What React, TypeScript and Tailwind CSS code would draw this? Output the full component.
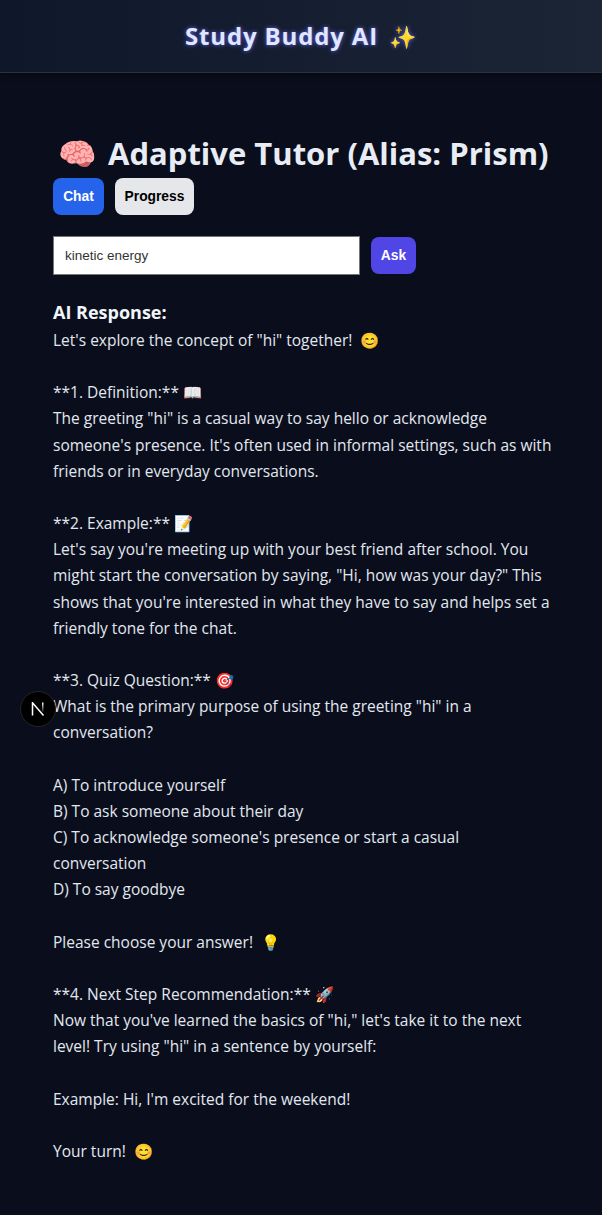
const response = `Let's explore the concept of "hi" together!  😊

**1. Definition:** 📖
The greeting "hi" is a casual way to say hello or acknowledge someone's presence. It's often used in informal settings, such as with friends or in everyday conversations.

**2. Example:** 📝
Let's say you're meeting up with your best friend after school. You might start the conversation by saying, "Hi, how was your day?" This shows that you're interested in what they have to say and helps set a friendly tone for the chat.

**3. Quiz Question:** 🎯
What is the primary purpose of using the greeting "hi" in a conversation?

A) To introduce yourself
B) To ask someone about their day
C) To acknowledge someone's presence or start a casual conversation
D) To say goodbye

Please choose your answer!  💡

**4. Next Step Recommendation:** 🚀
Now that you've learned the basics of "hi," let's take it to the next level! Try using "hi" in a sentence by yourself:

Example: Hi, I'm excited for the weekend!

Your turn!  😊`;

function NextBadge() {
  return (
    <div className="absolute top-[691px] left-[20px] flex h-9 w-9 items-center justify-center rounded-full border border-[#262626] bg-black">
      <svg width="14" height="14" viewBox="0 0 14 14" fill="none">
        <defs>
          <linearGradient id="stem" x1="0" y1="0" x2="0" y2="1">
            <stop offset="0" stopColor="#fff" />
            <stop offset="1" stopColor="#fff" stopOpacity="0.1" />
          </linearGradient>
        </defs>
        <path d="M1.5 13.5V0.8L12.5 13.5" stroke="#fff" strokeWidth="1.5" />
        <rect x="11" y="0.5" width="1.5" height="9.5" fill="url(#stem)" />
      </svg>
    </div>
  );
}

export default function App() {
  return (
    <div className="min-h-[1215px] bg-[#0a0e1c] font-['Open_Sans',sans-serif] text-[#e2e8f0]">
      <header className="relative flex h-[73px] items-center justify-center border-b border-[#2a3142] bg-gradient-to-r from-[#0f172a] to-[#1c2536] shadow-[0_2px_6px_rgba(0,0,0,0.4)]">
        <h1 className="text-2xl font-bold tracking-[0.85px] text-[#e0e7ff] [text-shadow:0_0_4px_#6366f1]">
          Study Buddy AI <span className="ml-1 text-[22px]">✨</span>
        </h1>
      </header>
      <main className="pt-[59px] pr-[46px] pl-[53px]">
        <h2 className="text-[31px] leading-[42px] font-bold text-[#e8edf5]">
          <span className="mr-[3px] ml-[5px]">🧠</span> Adaptive Tutor (Alias: Prism)
        </h2>
        <div className="mt-[4px] flex gap-[11px] font-['Liberation_Sans',sans-serif]">
          <button className="h-[37px] w-[51px] rounded-lg bg-[#2563eb] pt-px text-[13.8px] font-semibold text-white">Chat</button>
          <button className="h-[37px] w-[79px] rounded-lg bg-[#e5e7eb] pt-px text-[13.8px] font-semibold text-black">Progress</button>
        </div>
        <div className="mt-[21px] flex items-center gap-[11px] font-['Liberation_Sans',sans-serif]">
          <input
            readOnly
            value="kinetic energy"
            className="h-[39px] w-[307px] border border-[#767676] bg-white px-[11px] text-[13.5px] text-[#333] outline-none"
          />
          <button className="h-[37px] w-[45px] rounded-lg bg-[#4f46e5] pt-px text-[13.8px] font-semibold text-white">Ask</button>
        </div>
        <h3 className="mt-[24px] mb-[2px] text-lg leading-[26px] font-bold text-[#f1f5f9]">AI Response:</h3>
        <p className="whitespace-pre-wrap text-[15.5px] leading-[26.16px] text-[#e2e8f0]">{response}</p>
      </main>
      <NextBadge />
    </div>
  );
}
